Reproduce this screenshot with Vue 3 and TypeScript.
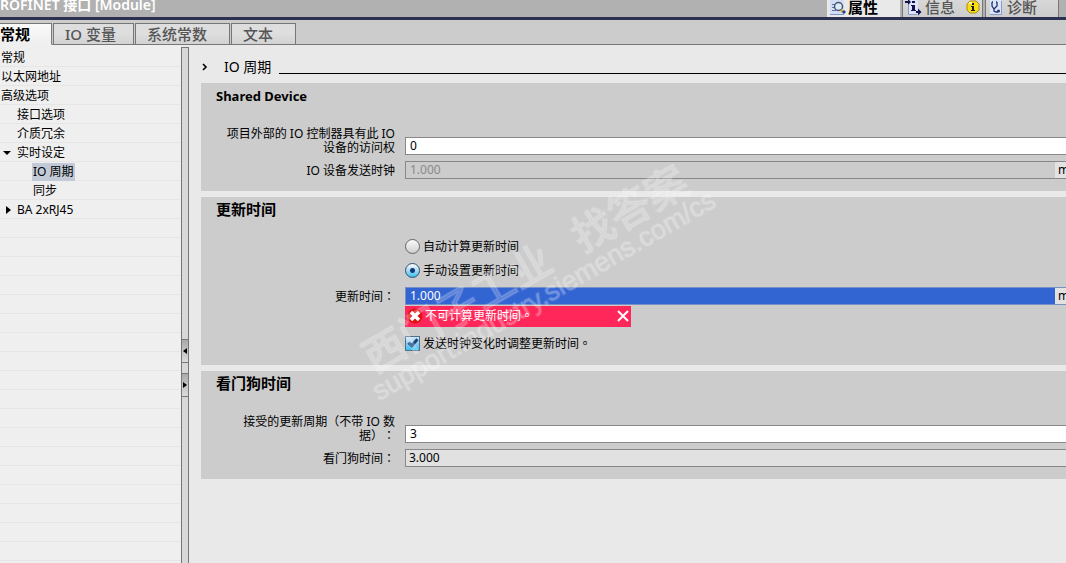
<script setup lang="ts">
import { ref } from 'vue'

interface TreeItem {
  text: string
  level: number
  arrow?: 'open' | 'closed'
}

const tabs: string[] = ['常规', 'IO 变量', '系统常数', '文本']
const activeTab = ref('常规')

const tree: TreeItem[] = [
  { text: '常规', level: 0 },
  { text: '以太网地址', level: 0 },
  { text: '高级选项', level: 0 },
  { text: '接口选项', level: 1 },
  { text: '介质冗余', level: 1 },
  { text: '实时设定', level: 1, arrow: 'open' },
  { text: 'IO 周期', level: 2 },
  { text: '同步', level: 2 },
  { text: 'BA 2xRJ45', level: 1, arrow: 'closed' },
]
const selected = ref('IO 周期')

const deviceCount = ref('0')
const sendClock = ref('1.000')
const mode = ref('manual')
const updateTime = ref('1.000')
const adjust = ref(true)
const cycles = ref('3')
const watchdog = ref('3.000')
const showError = ref(true)
</script>

<template>
  <div class="window">
    <header class="titlebar">
      <h1 class="title">ROFINET 接口 [Module]</h1>
      <div class="views">
        <button type="button" class="view current">
          <svg width="16" height="17" viewBox="0 0 16 17" aria-hidden="true">
            <path d="M0 0h14v15H0z" fill="#d3def5" />
            <path d="M0 15.500h14" stroke="#7d93c8" />
            <path d="M2 5.500h3M2 8.500h2M2 11.500h4" stroke="#5a6ea8" />
            <circle cx="8.500" cy="7.500" r="4" fill="#dcebfa" stroke="#4a5570" stroke-width="1.500" />
            <path d="M11 11l2 2" stroke="#d9a532" stroke-width="2.500" />
            <path d="M13 12l2 2" stroke="#21418c" stroke-width="3" />
          </svg>
          <span>属性</span>
        </button>
        <button type="button" class="view info">
          <svg width="17" height="17" viewBox="0 0 17 17" aria-hidden="true">
            <path d="M3 0h10v15H3z" fill="#dbe4f8" />
            <path d="M3.500 6v9.500H12" fill="none" stroke="#8b9ccb" />
            <path d="M0 3h4M11 13h4" stroke="#12124e" stroke-width="2" />
            <path d="M3 0l3 3-3 3zM13 9.500l3.500 3.500-3.500 3.500z" fill="#12124e" />
            <path d="M7 2h3v2H7zM6 6h4v5h1v1H6v-1h1V7H6z" fill="#12124e" />
          </svg>
          <span>信息</span>
          <svg class="badge" width="14" height="14" viewBox="0 0 14 14" aria-hidden="true">
            <path d="M4 1h6l3 3v6l-3 3H4l-3-3V4z" fill="#f7dc16" stroke="#a98d13" />
            <path d="M3 3h3" stroke="#fff8ab" stroke-width="2" />
            <path d="M6 3h2v2H6zM5 6h3v4h1v1H5v-1h1V7H5z" fill="#1a1a1a" />
          </svg>
        </button>
        <button type="button" class="view">
          <svg width="14" height="17" viewBox="0 0 14 17" aria-hidden="true">
            <path d="M1 0h11v15H1z" fill="#dbe5fa" />
            <path d="M1 15.500h11.500V2" fill="none" stroke="#8b9ccb" />
            <path d="M3 3v4l2 3 3-3V3M3 3h1M7 3h1M5 10v2l2 1h2" fill="none" stroke="#25336a" stroke-width="1.300" />
            <circle cx="9.500" cy="12" r="1.500" fill="#25336a" />
          </svg>
          <span>诊断</span>
        </button>
      </div>
    </header>

    <nav class="tabs">
      <button
        v-for="t in tabs"
        :key="t"
        type="button"
        class="tab"
        :class="{ active: t === activeTab }"
        @click="activeTab = t"
      >{{ t }}</button>
    </nav>

    <div class="body">
      <nav class="side">
        <ul class="tree">
          <li v-for="item in tree" :key="item.text" :class="'level' + item.level">
            <span v-if="item.arrow" class="arrow" :class="item.arrow"></span>
            <button type="button" class="node" :class="{ selected: item.text === selected }" @click="selected = item.text">{{ item.text }}</button>
          </li>
        </ul>
      </nav>

      <div class="splitter">
        <button type="button" class="grip" aria-label="向左折叠"><span class="tri left"></span></button>
        <button type="button" class="grip" aria-label="向右展开"><span class="tri right"></span></button>
      </div>

      <main class="content">
        <div class="heading">
          <svg width="6" height="8" viewBox="0 0 6 8" aria-hidden="true">
            <path d="M1 1l3 3-3 3" fill="none" stroke="#000" stroke-width="1.600" />
          </svg>
          <h2>IO 周期</h2>
          <span class="rule"></span>
        </div>

        <section class="panel">
          <h3>Shared Device</h3>
          <div class="row tall">
            <label for="count">项目外部的 IO 控制器具有此 IO 设备的访问权</label>
            <div class="field"><input id="count" v-model="deviceCount" type="text" /></div>
          </div>
          <div class="row">
            <label for="clock">IO 设备发送时钟</label>
            <div class="field disabled"><input id="clock" v-model="sendClock" type="text" disabled /><span class="unit">ms</span></div>
          </div>
        </section>

        <section class="panel">
          <h3>更新时间</h3>
          <div class="options">
            <label class="option"><input v-model="mode" type="radio" name="mode" value="auto" /><span>自动计算更新时间</span></label>
            <label class="option"><input v-model="mode" type="radio" name="mode" value="manual" /><span>手动设置更新时间</span></label>
          </div>
          <div class="row">
            <label for="update">更新时间<span class="punct">：</span></label>
            <div class="field marked"><input id="update" v-model="updateTime" type="text" /><span class="unit">ms</span></div>
          </div>
          <div v-if="showError" class="error" role="alert">
            <svg width="16" height="16" viewBox="0 0 16 16" aria-hidden="true">
              <circle cx="8" cy="8" r="7.500" fill="#e01313" />
              <path d="M4 4l8 8M12 4l-8 8" stroke="#fff" stroke-width="3.500" />
            </svg>
            <span class="message">不可计算更新时间<span class="punct">。</span></span>
            <button type="button" class="close" aria-label="关闭" @click="showError = false">
              <svg width="12" height="12" viewBox="0 0 12 12" aria-hidden="true">
                <path d="M1 1l10 10M11 1L1 11" stroke="#fff" stroke-width="2" />
              </svg>
            </button>
          </div>
          <div class="options last">
            <label class="option"><input v-model="adjust" type="checkbox" /><span>发送时钟变化时调整更新时间<span class="punct">。</span></span></label>
          </div>
        </section>

        <section class="panel">
          <h3>看门狗时间</h3>
          <div class="row tall">
            <label for="cycles">接受的更新周期（不带 IO 数据）<span class="punct">：</span></label>
            <div class="field"><input id="cycles" v-model="cycles" type="text" /></div>
          </div>
          <div class="row">
            <label for="watchdog">看门狗时间<span class="punct">：</span></label>
            <div class="field readonly"><input id="watchdog" v-model="watchdog" type="text" readonly /></div>
          </div>
        </section>
      </main>
    </div>

    <svg class="watermark" width="400" height="270" viewBox="0 0 400 270" aria-hidden="true">
      <g transform="translate(34 234) rotate(-30)">
        <text class="mark-cn" x="0" y="0">西门子工业</text>
        <text class="mark-cn" x="241" y="0">找答案</text>
      </g>
      <g transform="translate(39 261) rotate(-30)">
        <text class="mark-url" x="0" y="0">support.industry.siemens.com/cs</text>
      </g>
    </svg>
  </div>
</template>

<style>
html,
body,
#app {
  height: 100%;
}
body {
  margin: 0;
  overflow: hidden;
}
</style>

<style scoped>
.window {
  position: relative;
  display: flex;
  flex-direction: column;
  height: 100%;
  overflow: hidden;
  background: #e9e9e9;
  color: #000;
  font: 12px/14px "Noto Sans", "Noto Sans CJK SC", sans-serif;
  text-spacing-trim: space-all;
}
* {
  box-sizing: border-box;
}
h1,
h2,
h3,
ul {
  margin: 0;
  padding: 0;
}
button {
  padding: 0;
  border: 0;
  background: none;
  color: inherit;
  font: inherit;
  white-space: nowrap;
}
svg {
  display: block;
  flex: none;
}
.punct {
  font-family: "Noto Sans CJK TC", sans-serif;
  line-height: 1;
}
.titlebar {
  display: flex;
  flex: none;
  justify-content: space-between;
  height: 20px;
  overflow: hidden;
  border-bottom: 3px solid #2c3152;
  background: #b1b1b1;
}
.title {
  color: #fff;
  font-size: 14px;
  font-weight: 600;
  line-height: 10px;
  white-space: nowrap;
}
.views {
  display: flex;
  gap: 2px;
  height: 20px;
  margin-right: 7px;
}
.view {
  display: flex;
  align-items: flex-start;
  gap: 4px;
  width: 74px;
  height: 17px;
  padding-left: 3px;
  border-right: 1px solid #777;
  border-left: 1px solid #777;
  background: linear-gradient(#d8d8d8, #cccccc);
  color: #555;
  font-size: 15px;
  font-weight: 500;
  line-height: 15px;
}
.view > svg {
  margin-top: -1px;
}
.view.current {
  gap: 2px;
  width: 73px;
  height: 20px;
  border: 0;
  background: #e9e9e9;
  color: #000;
  font-weight: 700;
}
.view.info {
  gap: 3px;
  width: 81px;
  padding-left: 2px;
}
.view > .badge {
  margin: 0 0 0 8px;
}
.tabs {
  display: flex;
  flex: none;
  gap: 1px;
  height: 25px;
  padding-top: 3px;
  border-bottom: 1px solid #777;
  background: #cccccc;
}
.tab {
  height: 22px;
  padding: 0 22px 0 11px;
  border: 1px solid #777;
  background: linear-gradient(#dedede 50%, #d2d2d2);
  color: #555;
  font-size: 15px;
  font-weight: 500;
  line-height: 18px;
}
.tab:nth-child(2) {
  padding-right: 17px;
}
.tab.active {
  padding-right: 21px;
  padding-left: 0;
  border-bottom-color: #efefef;
  border-left: 0;
  background: linear-gradient(#fafafa, #efefef);
  color: #000;
  font-weight: 700;
}
.body {
  display: flex;
  flex: 1;
  min-height: 0;
}
.side {
  flex: none;
  width: 181px;
  padding-top: 3px;
  background: #efefef;
}
.tree {
  height: 100%;
  list-style: none;
  background: repeating-linear-gradient(transparent 0 18px, #e6e6e6 18px 19px);
}
.tree li {
  display: flex;
  align-items: center;
  height: 19px;
}
.level1 {
  padding-left: 16px;
}
.level2 {
  padding-left: 32px;
}
.node {
  height: 18px;
  padding: 0 1px;
  line-height: 18px;
}
.node.selected {
  background: #c1cad6;
}
.arrow {
  width: 0;
  height: 0;
  border: 4px solid transparent;
}
.arrow.open {
  margin: 4px 5px 0 -13px;
  border-top-color: #000;
}
.arrow.closed {
  margin: 0 5px 0 -10px;
  border-right-width: 0;
  border-left: 5px solid #000;
}
.splitter {
  display: flex;
  flex: none;
  flex-direction: column;
  gap: 10px;
  width: 8px;
  margin-top: 2px;
  padding-top: 291px;
  border: 1px solid #777;
  border-bottom: 0;
  background: #d8d8d8;
}
.grip {
  display: flex;
  align-items: center;
  justify-content: center;
  height: 24px;
  border-top: 1px solid #777;
  border-bottom: 1px solid #777;
  background: linear-gradient(#aaa, #dcdcdc);
}
.tri {
  border: 3px solid transparent;
}
.tri.left {
  border-left-width: 0;
  border-right: 4px solid #000;
}
.tri.right {
  border-right-width: 0;
  border-left: 4px solid #000;
}
.content {
  display: flex;
  flex: 1;
  flex-direction: column;
  gap: 6px;
  min-width: 0;
  padding-left: 12px;
}
.heading {
  display: flex;
  align-items: center;
  height: 32px;
  padding: 12px 0 0 1px;
}
h2 {
  margin: 0 8px 0 16px;
  font-size: 14px;
  font-weight: 400;
  line-height: 20px;
}
.rule {
  flex: 1;
  height: 1px;
  margin-top: 13px;
  background: #000;
}
.panel {
  padding-bottom: 12px;
  background: #cccccc;
}
h3 {
  margin-bottom: 17px;
  padding: 3px 15px 0;
  font-size: 13px;
  font-weight: 700;
  line-height: 21px;
}
.panel + .panel h3 {
  padding-top: 2px;
  margin-bottom: 18px;
  font-size: 15px;
}
.row {
  display: flex;
  align-items: flex-end;
  margin-right: -12px;
}
.row.tall {
  height: 31px;
}
.row + .row {
  margin-top: 6px;
}
.row label {
  width: 194px;
  margin-right: 10px;
  padding: 0 0 1px 24px;
  text-align: right;
}
.row.tall label {
  padding-bottom: 0;
}
.field {
  display: flex;
  flex: 1;
  height: 18px;
  border: 1px solid #888;
  background: #fff;
}
.field input {
  flex: 1;
  min-width: 0;
  padding: 0 4px;
  border: 0;
  outline: 0;
  background: none;
  color: #000;
  font: inherit;
}
.unit {
  width: 22px;
  padding-left: 3px;
  background: #e2e2e2;
  line-height: 16px;
}
.field.disabled {
  background: #cccccc;
}
.field.disabled input {
  color: #8a8a8a;
}
.field.readonly {
  background: #e1e1e1;
}
.field.readonly input {
  padding: 0 3px;
}
.field.marked {
  border-color: #7890c4;
}
.field.marked input {
  background: #3264d2;
  color: #fff;
}
.options {
  display: flex;
  flex-direction: column;
  gap: 8px;
  margin: 0 0 9px 204px;
}
.options.last {
  margin: 8px 0 2px 204px;
}
.option {
  display: flex;
  align-items: center;
  gap: 3px;
  height: 16px;
}
.option > span {
  padding-top: 2px;
}
.option input {
  flex: none;
  width: 15px;
  height: 15px;
  margin: 0;
  border: 1px solid #666;
  background: linear-gradient(#fafafa, #cfcfcf);
  appearance: none;
}
.option input[type="radio"] {
  border-radius: 50%;
}
.option input[type="radio"]:checked {
  border-color: #35506e;
  background:
    radial-gradient(circle, #0b3c78 0 2px, transparent 3px),
    linear-gradient(#ffffff, #a9d8f2 50%, #35c4ee);
}
.option input[type="checkbox"] {
  display: flex;
  justify-content: center;
  border-color: #4f6f8e;
}
.option input[type="checkbox"]:checked {
  background: linear-gradient(#d5e6f8, #8cc8ee 55%, #35c4ee);
}
.option input[type="checkbox"]:checked::after {
  box-sizing: border-box;
  width: 6px;
  height: 10px;
  border-right: 3px solid #14477e;
  border-bottom: 3px solid #14477e;
  content: "";
  transform: rotate(42deg);
}
.error {
  display: flex;
  align-items: center;
  width: 226px;
  height: 21px;
  margin: 1px 0 0 204px;
  padding: 0 2px 2px;
  background: #ff2659;
  color: #fff;
}
.message {
  flex: 1;
  margin-left: 2px;
}
.close {
  height: 16px;
}
.watermark {
  position: absolute;
  top: 140px;
  left: 340px;
  pointer-events: none;
}
.mark-cn,
.mark-url {
  fill: rgba(255, 255, 255, 0.24);
  stroke: rgba(255, 255, 255, 0.14);
  stroke-width: 2px;
}
.mark-cn {
  font: 500 42px "Noto Sans CJK SC", sans-serif;
}
.mark-url {
  font: 27px "Liberation Sans", sans-serif;
}
</style>
